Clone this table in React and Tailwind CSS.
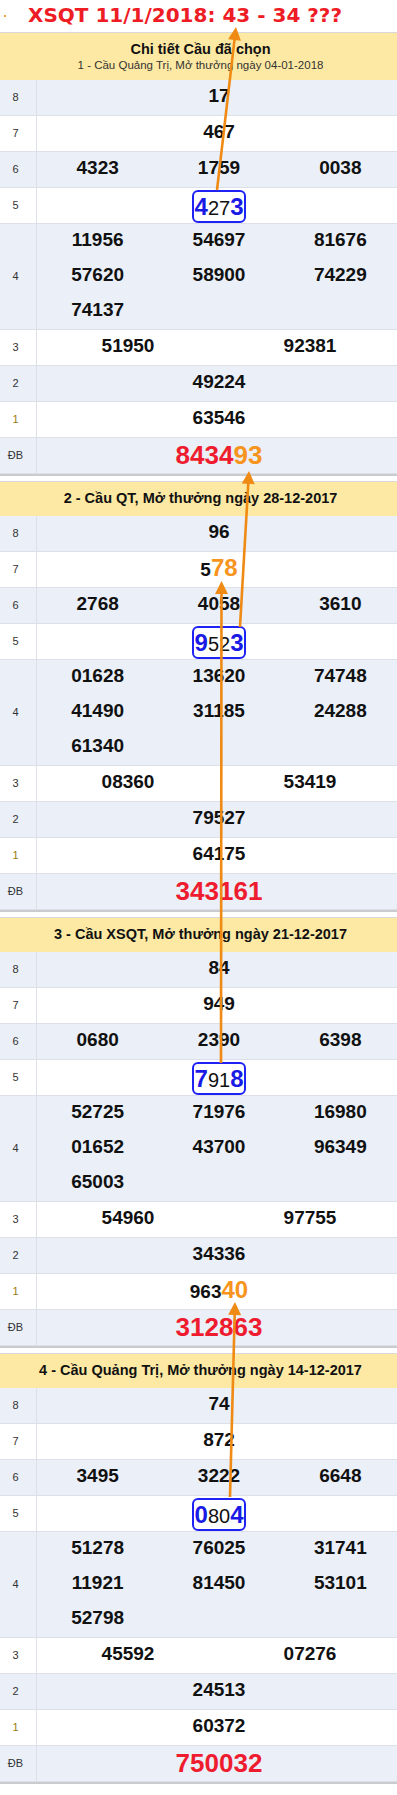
import React from "react";

const NUM = "font-['Liberation_Sans',Arial,sans-serif]";

function Cell({ children }) {
  return (
    <div className="h-[35px] leading-[31px] text-center text-[19px] font-bold text-[#111]">
      {children}
    </div>
  );
}

function Row({ label, alt, children, labelClass }) {
  return (
    <div
      className={`flex border-b border-[#dde1e7] ${alt ? "bg-[#eaeff8]" : "bg-white"}`}
    >
      <div
        className={`w-[37px] shrink-0 border-r border-[#dde1e7] flex items-center justify-center pr-[5px] text-[11px] ${
          labelClass || "text-[#333]"
        }`}
      >
        {label}
      </div>
      <div className="flex-1">{children}</div>
    </div>
  );
}

function Box({ a, mid, b }) {
  return (
    <div className="h-[35px] flex justify-center items-end">
      <div className="h-[33px] border-2 border-[#1e22f5] rounded-[6px] px-[1px] flex items-baseline leading-[29px]">
        <span className="text-[24px] font-bold text-[#1a1ae6]">{a}</span>
        <span className="text-[20px] text-[#111]">{mid}</span>
        <span className="text-[24px] font-bold text-[#1a1ae6]">{b}</span>
      </div>
    </div>
  );
}

function Section({ header, d }) {
  return (
    <div className={`${NUM} border-b-2 border-[#c9cbcf] mb-[5px]`}>
      {header}
      <Row label="8" alt>
        <Cell>{d.r8}</Cell>
      </Row>
      <Row label="7">
        <Cell>{d.r7}</Cell>
      </Row>
      <Row label="6" alt>
        <div className="grid grid-cols-3">
          {d.r6.map((n, i) => (
            <Cell key={i}>{n}</Cell>
          ))}
        </div>
      </Row>
      <Row label="5">
        <Box a={d.r5[0]} mid={d.r5[1]} b={d.r5[2]} />
      </Row>
      <Row label="4" alt>
        <div className="grid grid-cols-3">
          {d.r4.map((n, i) => (
            <Cell key={i}>{n}</Cell>
          ))}
        </div>
      </Row>
      <Row label="3">
        <div className="grid grid-cols-2">
          {d.r3.map((n, i) => (
            <Cell key={i}>{n}</Cell>
          ))}
        </div>
      </Row>
      <Row label="2" alt>
        <Cell>{d.r2}</Cell>
      </Row>
      <Row label="1" labelClass="text-[#9a7a12]">
        <Cell>{d.r1}</Cell>
      </Row>
      <Row label="ĐB" alt>
        <div className="h-[35px] leading-[35px] text-center text-[26px] font-bold text-[#ee1c2e]">
          {d.db}
        </div>
      </Row>
    </div>
  );
}

function HeaderOne({ text }) {
  return (
    <div className="border-t border-[#d8d8d8] bg-[#fde9a3] h-[35px] flex items-center justify-center text-[14.5px] font-bold text-[#111]">
      {text}
    </div>
  );
}

const O = ({ children }) => (
  <span className="text-[24px] font-bold text-[#f7941d]">{children}</span>
);

const sections = [
  {
    header: (
      <div className="border-t border-[#d8d8d8] bg-[#fde9a3] h-[48px] flex flex-col items-center justify-center">
        <div className="text-[14.5px] font-bold text-[#111] leading-[17px]">
          Chi tiết Cầu đã chọn
        </div>
        <div className="text-[11.5px] text-[#333] leading-[14px]">
          1 - Cầu Quảng Trị, Mở thưởng ngày 04-01-2018
        </div>
      </div>
    ),
    d: {
      r8: "17",
      r7: "467",
      r6: ["4323", "1759", "0038"],
      r5: ["4", "27", "3"],
      r4: ["11956", "54697", "81676", "57620", "58900", "74229", "74137"],
      r3: ["51950", "92381"],
      r2: "49224",
      r1: "63546",
      db: (
        <>
          8434<span className="text-[#f7941d]">93</span>
        </>
      ),
    },
  },
  {
    header: <HeaderOne text="2 - Cầu QT, Mở thưởng ngày 28-12-2017" />,
    d: {
      r8: "96",
      r7: (
        <>
          5<O>78</O>
        </>
      ),
      r6: ["2768", "4058", "3610"],
      r5: ["9", "52", "3"],
      r4: ["01628", "13620", "74748", "41490", "31185", "24288", "61340"],
      r3: ["08360", "53419"],
      r2: "79527",
      r1: "64175",
      db: "343161",
    },
  },
  {
    header: <HeaderOne text="3 - Cầu XSQT, Mở thưởng ngày 21-12-2017" />,
    d: {
      r8: "84",
      r7: "949",
      r6: ["0680", "2390", "6398"],
      r5: ["7", "91", "8"],
      r4: ["52725", "71976", "16980", "01652", "43700", "96349", "65003"],
      r3: ["54960", "97755"],
      r2: "34336",
      r1: (
        <>
          963<O>40</O>
        </>
      ),
      db: "312863",
    },
  },
  {
    header: <HeaderOne text="4 - Cầu Quảng Trị, Mở thưởng ngày 14-12-2017" />,
    d: {
      r8: "74",
      r7: "872",
      r6: ["3495", "3222", "6648"],
      r5: ["0", "80", "4"],
      r4: ["51278", "76025", "31741", "11921", "81450", "53101", "52798"],
      r3: ["45592", "07276"],
      r2: "24513",
      r1: "60372",
      db: "750032",
    },
  },
];

function Arrow({ x1, y1, x2, y2 }) {
  const dx = x2 - x1;
  const dy = y2 - y1;
  const len = Math.sqrt(dx * dx + dy * dy);
  const ux = dx / len;
  const uy = dy / len;
  const hl = 13;
  const hw = 6.5;
  const bx = x2 - ux * hl;
  const by = y2 - uy * hl;
  const px = -uy;
  const py = ux;
  const pts = `${x2},${y2} ${bx + px * hw},${by + py * hw} ${bx - px * hw},${by - py * hw}`;
  return (
    <g>
      <line x1={x1} y1={y1} x2={bx + ux * 1} y2={by + uy * 1} stroke="#ef8a14" strokeWidth="2.6" />
      <polygon points={pts} fill="#ef8a14" />
    </g>
  );
}

export default function App() {
  return (
    <div className="relative w-[397px] min-h-[1795px] overflow-hidden bg-white">
      <div className="relative h-[32px] pl-[28px] leading-[30px] text-[20px] font-bold text-[#ee1c25] font-['DejaVu_Sans',sans-serif] whitespace-nowrap">
        <span className="absolute left-[4px] top-[15px] w-[2px] h-[2px] bg-[#f0a040]" />
        XSQT 11/1/2018: 43 - 34 ???
      </div>
      <div className="w-[401px]">
        {sections.map((s, i) => (
          <Section key={i} header={s.header} d={s.d} />
        ))}
      </div>
      <svg
        className="absolute left-0 top-0 pointer-events-none"
        width="397"
        height="1795"
        viewBox="0 0 397 1795"
      >
        <Arrow x1={217} y1={190} x2={236} y2={27} />
        <Arrow x1={240} y1={627} x2={249} y2={471} />
        <Arrow x1={221} y1={1063} x2={221.5} y2={581} />
        <Arrow x1={230} y1={1497} x2={235} y2={1302} />
      </svg>
    </div>
  );
}
